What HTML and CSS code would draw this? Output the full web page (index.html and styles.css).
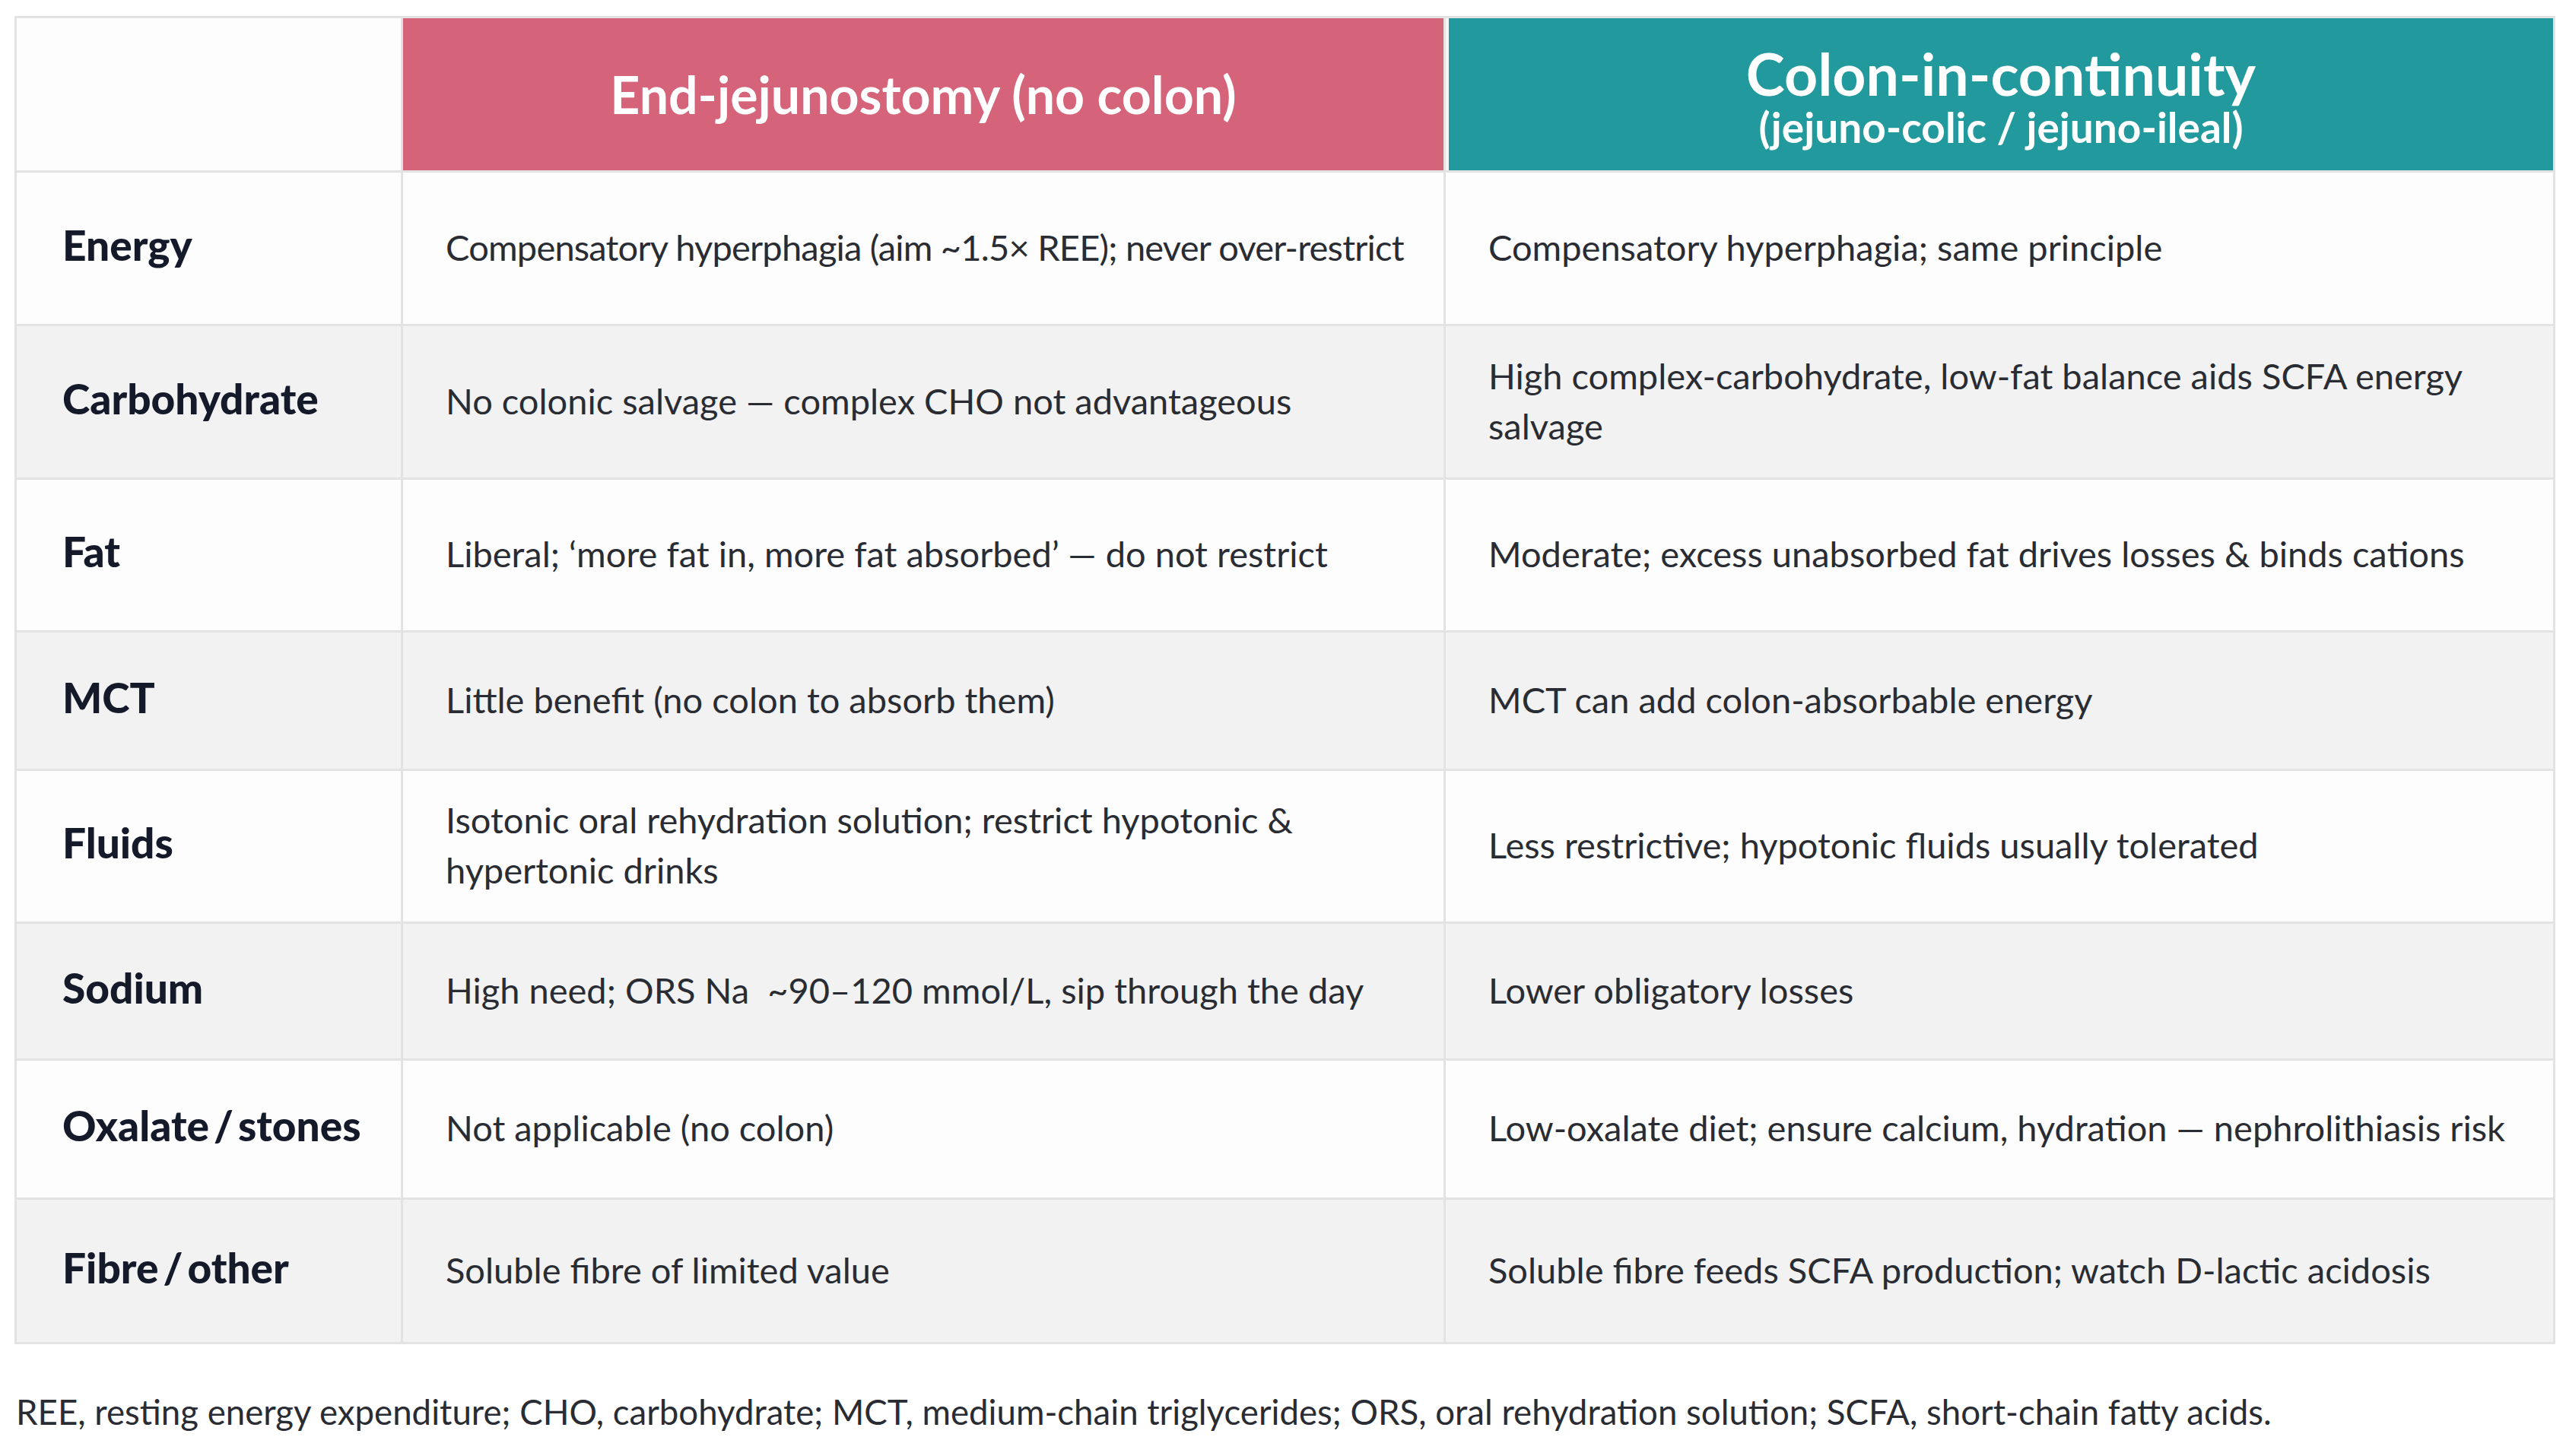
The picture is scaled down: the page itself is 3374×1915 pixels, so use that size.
FILE: index.html
```html
<!DOCTYPE html>
<html lang="en">
<head>
<meta charset="utf-8">
<title>Diet by anatomy</title>
<link rel="stylesheet" href="styles.css">
</head>
<body>
<main class="page">
  <div class="table">
    <div class="cell head blank"></div>
    <div class="cell head pink"><span class="head-title">End-jejunostomy (no colon)</span></div>
    <div class="cell head teal"><span class="head-title big">Colon-in-continuity</span><span class="head-sub">(jejuno-colic / jejuno-ileal)</span></div>

    <div class="cell label">Energy</div>
    <div class="cell tight">Compensatory hyperphagia (aim ~1.5× REE); never over-restrict</div>
    <div class="cell">Compensatory hyperphagia; same principle</div>

    <div class="cell label alt">Carbohydrate</div>
    <div class="cell alt">No colonic salvage — complex CHO not advantageous</div>
    <div class="cell alt">High complex-carbohydrate, low-fat balance aids SCFA energy<br>salvage</div>

    <div class="cell label">Fat</div>
    <div class="cell">Liberal; ‘more fat in, more fat absorbed’ — do not restrict</div>
    <div class="cell">Moderate; excess unabsorbed fat drives losses &amp; binds cations</div>

    <div class="cell label alt">MCT</div>
    <div class="cell alt">Little benefit (no colon to absorb them)</div>
    <div class="cell alt">MCT can add colon-absorbable energy</div>

    <div class="cell label">Fluids</div>
    <div class="cell">Isotonic oral rehydration solution; restrict hypotonic &amp;<br>hypertonic drinks</div>
    <div class="cell">Less restrictive; hypotonic fluids usually tolerated</div>

    <div class="cell label alt">Sodium</div>
    <div class="cell alt">High need; ORS Na&nbsp; ~90–120 mmol/L, sip through the day</div>
    <div class="cell alt">Lower obligatory losses</div>

    <div class="cell label">Oxalate / stones</div>
    <div class="cell">Not applicable (no colon)</div>
    <div class="cell">Low-oxalate diet; ensure calcium, hydration — nephrolithiasis risk</div>

    <div class="cell label alt">Fibre / other</div>
    <div class="cell alt">Soluble fibre of limited value</div>
    <div class="cell alt">Soluble fibre feeds SCFA production; watch D-lactic acidosis</div>
  </div>
  <p class="note">REE, resting energy expenditure; CHO, carbohydrate; MCT, medium-chain triglycerides; ORS, oral rehydration solution; SCFA, short-chain fatty acids.</p>
</main>
</body>
</html>
```

FILE: styles.css
```css
html, body {
  margin: 0;
  padding: 0;
  background: #ffffff;
}

body {
  font-family: "Lato", "Open Sans", "Liberation Sans", sans-serif;
  color: #2a2c33;
}

.page {
  padding: 21px 14px 0 19px;
}

.table {
  display: grid;
  grid-template-columns: 505px 1368px 1456px;
  grid-template-rows: 200px 199px 199px 198px 179px 198px 177px 180px 187px;
  gap: 3px;
  background: #e3e3e3;
  border: 3px solid #e3e3e3;
  width: max-content;
}

.cell {
  display: flex;
  flex-direction: column;
  justify-content: center;
  padding: 0 20px 4px 56px;
  background: #fdfdfd;
  font-size: 47px;
  line-height: 66px;
  white-space: nowrap;
}

.cell.tight {
  letter-spacing: -0.8px;
}

.cell.alt {
  background: #f2f2f2;
}

.label {
  font-weight: 900;
  font-size: 55px;
  padding-left: 60px;
  padding-bottom: 10px;
  word-spacing: -7px;
  color: #141a2a;
}

.head {
  align-items: center;
  padding: 0;
  color: #ffffff;
  font-weight: 700;
}

.head.blank {
  background: #fdfdfd;
}

.head.pink {
  background: #d5647a;
}

.head.teal {
  background: #22999d;
  border-left: 4px solid #f6f6f6;
  padding-top: 5px;
}

.head-title {
  font-size: 68px;
  line-height: 80px;
}

.head-title.big {
  font-size: 77px;
  line-height: 80px;
}

.head-sub {
  font-size: 55px;
  line-height: 62px;
}

.note {
  margin: 62px 0 0 2px;
  font-size: 45.6px;
  line-height: 54px;
  color: #2a2c33;
}
```
